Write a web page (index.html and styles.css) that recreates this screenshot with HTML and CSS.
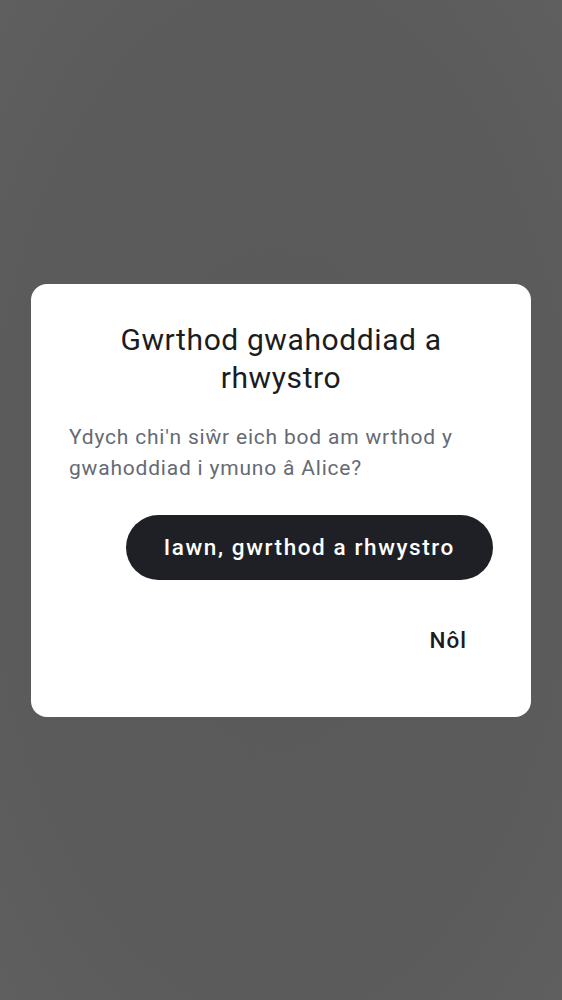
FILE: index.html
```html
<!DOCTYPE html>
<html lang="cy">
<head>
<meta charset="utf-8">
<link rel="stylesheet" href="styles.css">
</head>
<body>
<div class="scrim">
  <div class="dialog" role="dialog">
    <h1 class="title">Gwrthod gwahoddiad a rhwystro</h1>
    <p class="body">Ydych chi'n siŵr eich bod am wrthod y gwahoddiad i ymuno â Alice?</p>
    <div class="actions">
      <button class="btn btn-primary">Iawn, gwrthod a rhwystro</button>
      <button class="btn btn-text">Nôl</button>
    </div>
  </div>
</div>
</body>
</html>
```
FILE: styles.css
```css
html, body {
  margin: 0;
  padding: 0;
  height: 100%;
}
body {
  background: #5b5b5b;
  font-family: Roboto, "Noto Sans", sans-serif;
}
.scrim {
  min-height: 1000px;
  display: flex;
  align-items: center;
  justify-content: center;
  background: radial-gradient(ellipse at center, #5a5a5a 0%, #5b5b5b 70%, #5f5f5f 100%);
}
.dialog {
  width: 500px;
  box-sizing: border-box;
  background: #ffffff;
  border-radius: 16px;
  padding: 37px 38px 44px;
}
.title {
  margin: 0;
  font-size: 30px;
  line-height: 38px;
  font-weight: 400;
  letter-spacing: 0.6px;
  color: #1b1c20;
  text-align: center;
}
.body {
  margin: 25px 0 0;
  font-size: 21px;
  line-height: 31px;
  letter-spacing: 0.8px;
  color: #656a73;
}
.actions {
  margin-top: 31px;
  display: flex;
  flex-direction: column;
  align-items: flex-end;
  gap: 28px;
}
.btn {
  border: none;
  font-family: Roboto, "Noto Sans", sans-serif;
  font-size: 22.5px;
  font-weight: 500;
  letter-spacing: 1.6px;
  height: 65px;
  border-radius: 33px;
  cursor: pointer;
}
.btn-primary {
  background: #1f2025;
  color: #ffffff;
  padding: 0 38px;
}
.btn-text {
  background: transparent;
  color: #1b1c20;
  padding: 0 26px;
  letter-spacing: 1px;
}
```
